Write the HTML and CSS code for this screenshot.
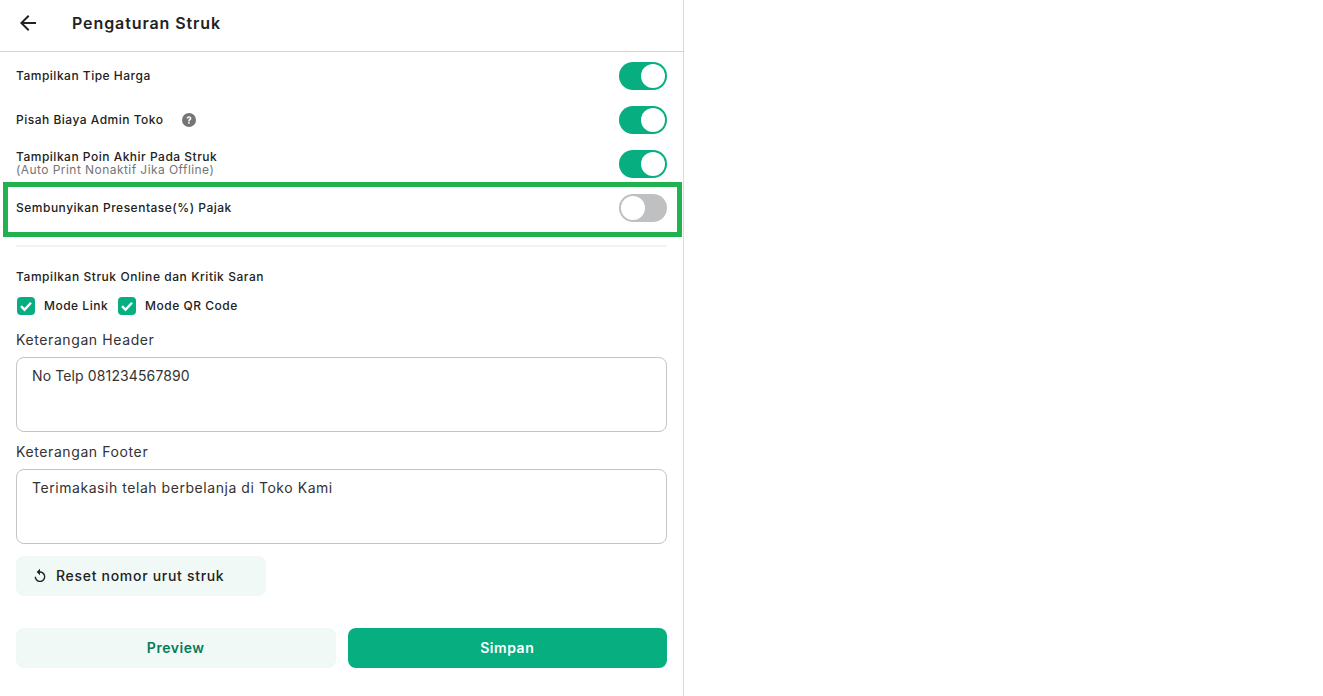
FILE: index.html
```html
<!DOCTYPE html>
<html lang="en">
<head>
    <meta charset="UTF-8">
    <title>Pengaturan Struk</title>
    <link rel="stylesheet" href="styles.css">
</head>
<body>
    <div class="panel">
        <div class="header">
            <svg class="back-icon" width="24" height="24" viewBox="0 0 24 24"><path d="M20 11H7.83l5.59-5.59L12 4l-8 8 8 8 1.41-1.41L7.83 13H20z"/></svg>
            <h1>Pengaturan Struk</h1>
        </div>
        <div class="content">
            <div class="setting-row">
                <div class="setting-label">Tampilkan Tipe Harga</div>
                <div class="toggle on"><span class="knob"></span></div>
            </div>
            <div class="setting-row">
                <div class="setting-label with-help">Pisah Biaya Admin Toko
                    <svg class="help-icon" width="14" height="14" viewBox="0 0 14 14"><circle cx="7" cy="7" r="7" fill="#757575"/><path d="M4.600 5.500C4.600 4.100 5.600 3.200 7 3.200s2.400.9 2.400 2.100c0 1.600-1.700 1.700-1.700 3.100H6.200c0-2.100 1.600-2.200 1.600-3.100 0-.5-.3-.8-.8-.8s-.9.4-.9 1z" fill="#fff"/><rect x="6.200" y="9.200" width="1.500" height="1.500" fill="#fff"/></svg>
                </div>
                <div class="toggle on"><span class="knob"></span></div>
            </div>
            <div class="setting-row">
                <div class="setting-label">Tampilkan Poin Akhir Pada Struk
                    <small>(Auto Print Nonaktif Jika Offline)</small>
                </div>
                <div class="toggle on"><span class="knob"></span></div>
            </div>
            <div class="setting-row highlighted">
                <div class="setting-label">Sembunyikan Presentase(%) Pajak</div>
                <div class="toggle"><span class="knob"></span></div>
            </div>

            <div class="divider"></div>

            <div class="section-title">Tampilkan Struk Online dan Kritik Saran</div>
            <div class="check-group">
                <label class="check-item">
                    <span class="checkbox"><svg width="18" height="18" viewBox="0 0 18 18"><path d="M4 9.200l3.500 3.500L14 5.800" fill="none" stroke="#fff" stroke-width="2.400"/></svg></span>
                    Mode Link
                </label>
                <label class="check-item">
                    <span class="checkbox"><svg width="18" height="18" viewBox="0 0 18 18"><path d="M4 9.200l3.500 3.500L14 5.800" fill="none" stroke="#fff" stroke-width="2.400"/></svg></span>
                    Mode QR Code
                </label>
            </div>

            <div class="field-label">Keterangan Header</div>
            <div class="text-box phone">No Telp 081234567890</div>

            <div class="field-label">Keterangan Footer</div>
            <div class="text-box">Terimakasih telah berbelanja di Toko Kami</div>

            <button class="reset-btn">
                <svg width="16" height="16" viewBox="0 0 24 24"><path d="M12 5V1L7 6l5 5V7c3.310 0 6 2.690 6 6s-2.690 6-6 6-6-2.690-6-6H4c0 4.420 3.580 8 8 8s8-3.580 8-8-3.580-8-8-8z" fill="#222"/></svg>
                <span class="reset-text">Reset nomor urut struk</span>
            </button>

            <div class="actions">
                <button class="btn btn-preview">Preview</button>
                <button class="btn btn-save">Simpan</button>
            </div>
        </div>
    </div>
</body>
</html>
```

FILE: styles.css
```css
* {
    margin: 0;
    padding: 0;
    box-sizing: border-box;
}

body {
    font-family: 'Inter', 'Noto Sans', sans-serif;
    background: #fff;
    color: #222;
    height: 100vh;
    overflow: hidden;
}

.panel {
    width: 684px;
    height: 100%;
    border-right: 1px solid #d9d9d9;
}

.header {
    display: flex;
    align-items: center;
    height: 52px;
    padding: 0 16px;
    border-bottom: 1px solid #d6d6d6;
}

.back-icon {
    fill: #222;
    margin-right: 32px;
    margin-top: -6px;
}

.header h1 {
    font-size: 16px;
    font-weight: 600;
    letter-spacing: 0.9px;
    margin-top: -5px;
}

.content {
    padding: 2px 16px 0;
}

.setting-row {
    position: relative;
    display: flex;
    justify-content: space-between;
    align-items: center;
    height: 44px;
}

.setting-label {
    margin-top: -2px;
    font-size: 12px;
    font-weight: 500;
    letter-spacing: 0.5px;
    line-height: 13px;
}

.setting-label.with-help {
    margin-top: 0;
}

.setting-label small {
    display: block;
    font-size: 12px;
    font-weight: 400;
    letter-spacing: 0.44px;
    color: #757575;
}

.help-icon {
    margin-left: 15px;
    vertical-align: -3px;
}

/* annotation box over the row */
.highlighted::after {
    content: "";
    position: absolute;
    top: -4px;
    left: -13px;
    right: -15px;
    bottom: -7px;
    border: 5px solid #21b14f;
    pointer-events: none;
}

.toggle {
    display: flex;
    justify-content: flex-start;
    width: 48px;
    height: 28px;
    padding: 2px;
    border-radius: 14px;
    background: #bfc0c2;
}

.toggle.on {
    justify-content: flex-end;
    background: #06ae80;
}

.knob {
    width: 24px;
    height: 24px;
    border-radius: 50%;
    background: #fff;
}

.divider {
    height: 2px;
    margin-top: 15px;
    background: #f3f3f3;
}

.section-title {
    margin-top: 22px;
    font-size: 12px;
    font-weight: 500;
    letter-spacing: 0.56px;
    line-height: 16px;
}

.check-group {
    display: flex;
    gap: 10px;
    margin-top: 12px;
    padding-left: 1px;
}

.check-item {
    display: flex;
    align-items: flex-start;
    gap: 9px;
    height: 18px;
    font-size: 12px;
    font-weight: 500;
    letter-spacing: 0.5px;
    line-height: 17px;
}

.checkbox {
    display: block;
    width: 18px;
    height: 18px;
    border-radius: 4px;
    background: #06ae80;
}

.field-label {
    margin-top: 16px;
    font-size: 14px;
    letter-spacing: 0.6px;
    line-height: 18px;
    color: #333;
}

.text-box {
    height: 75px;
    margin-top: 8px;
    padding: 9px 15px;
    border: 1px solid #c4c4c4;
    border-radius: 8px;
    font-size: 14px;
    letter-spacing: 0.55px;
    line-height: 18px;
    color: #333;
}

.text-box.phone {
    letter-spacing: 0.12px;
}

.text-box + .field-label {
    margin-top: 11px;
}

.reset-btn {
    display: flex;
    align-items: center;
    gap: 8px;
    width: 250px;
    height: 40px;
    margin-top: 12px;
    padding-left: 16px;
    border: none;
    border-radius: 8px;
    background: #f0f9f6;
    color: #222;
    font-family: inherit;
    font-size: 14px;
    font-weight: 500;
    letter-spacing: 0.7px;
}

.reset-text {
    margin-top: -2px;
}

.actions {
    display: flex;
    gap: 12px;
    margin-top: 32px;
}

.btn {
    flex: 1;
    height: 40px;
    padding-bottom: 2px;
    border: none;
    border-radius: 8px;
    font-family: inherit;
    font-size: 14px;
    font-weight: 600;
    letter-spacing: 0.55px;
}

.btn-preview {
    background: #f0f9f6;
    color: #067a5a;
}

.btn-save {
    background: #06ae80;
    color: #fff;
}
```
